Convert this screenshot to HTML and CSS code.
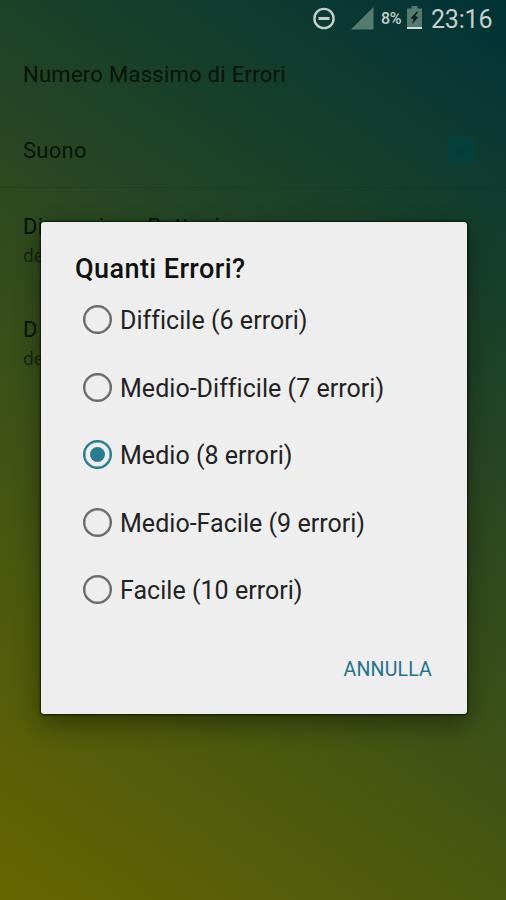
FILE: index.html
```html
<!DOCTYPE html>
<html lang="it">
<head>
<meta charset="utf-8">
<title>Quanti Errori?</title>
<link rel="stylesheet" href="styles.css">
</head>
<body>
<div class="screen">
  <header class="status">
    <svg class="dnd" width="24" height="24" viewBox="0 0 24 24"><circle cx="12" cy="11.500" r="9.600" fill="none" stroke="#c5cfcb" stroke-width="2.400"/><path d="M6.500 11.500h11" stroke="#c5cfcb" stroke-width="3"/></svg>
    <svg class="signal" width="23" height="23" viewBox="0 0 23 23"><path d="M0 22.500L22.500 0V22.500Z" fill="#557b71"/></svg>
    <span class="percent">8%</span>
    <svg class="battery" width="16" height="24" viewBox="0 0 16 24"><path d="M4.500 0h6v2.500H15V20.500H0V2.500h4.500Z" fill="#557b71"/><path d="M9.800 5.500L3.500 12.500l3.200.5-2 5.500 6.800-7.500-3.300-.7 3-4.800Z" fill="#06221d"/><path d="M0 20.800h15v2.200H0z" fill="#d5dfdb"/></svg>
    <span class="clock">23:16</span>
  </header>
  <main class="settings">
    <div class="row"><span class="label">Numero Massimo di Errori</span></div>
    <div class="row sound"><span class="label">Suono</span>
      <svg class="check" width="26" height="26" viewBox="0 0 26 26"><rect width="26" height="26" rx="2" fill="#033f3b"/><path d="M6 13l5 5L21 8" fill="none" stroke="#093d34" stroke-width="2"/></svg>
    </div>
    <div class="row double"><span class="label">Dimensione Bottoni</span><span class="detail">de</span></div>
    <div class="row double"><span class="label">D</span><span class="detail">de</span></div>
  </main>
  <section class="dialog" role="dialog">
    <h1 class="title">Quanti Errori?</h1>
    <div class="options">
      <div class="option"><i class="radio"></i><span>Difficile (6 errori)</span></div>
      <div class="option"><i class="radio"></i><span>Medio-Difficile (7 errori)</span></div>
      <div class="option"><i class="radio on"></i><span>Medio (8 errori)</span></div>
      <div class="option"><i class="radio"></i><span>Medio-Facile (9 errori)</span></div>
      <div class="option"><i class="radio"></i><span>Facile (10 errori)</span></div>
    </div>
    <div class="actions"><span class="cancel">ANNULLA</span></div>
  </section>
</div>
</body>
</html>
```
FILE: styles.css
```css
* { box-sizing: border-box; }
body { margin: 0; font-family: Roboto, "Liberation Sans", sans-serif; }
.screen {
  position: relative;
  width: 506px;
  height: 900px;
  overflow: hidden;
  background: linear-gradient(35deg, #666600 0%, #003338 100%);
}
.status {
  display: flex;
  align-items: center;
  justify-content: flex-end;
  height: 37px;
  padding-right: 14px;
  color: #c5cfcb;
}
.signal { margin-left: 15px; margin-top: -1px; }
.percent { margin-left: 7px; width: 23px; font-size: 16px; font-weight: 500; letter-spacing: -0.3px; white-space: nowrap; }
.battery { margin-left: 3px; margin-top: -2px; }
.clock { margin-left: 8px; width: 61px; font-size: 25px; line-height: 36px; margin-top: 2px; white-space: nowrap; letter-spacing: -0.2px; }
.settings { display: flex; flex-direction: column; color: #071309; }
.row {
  display: flex;
  align-items: center;
  justify-content: space-between;
  height: 75px;
  padding: 0 31px 0 23px;
}
.row.sound { height: 76px; border-bottom: 1px solid rgba(0, 20, 0, 0.1); }
.row.sound .label { margin-top: 2px; }
.label { font-size: 22px; line-height: 28px; letter-spacing: 0.27px; }
.row.double {
  flex-direction: column;
  align-items: flex-start;
  justify-content: flex-start;
  height: 103px;
  padding-top: 25px;
}
.detail { font-size: 19px; line-height: 28px; margin-top: 1px; color: #142810; }
.dialog {
  position: absolute;
  left: 41px;
  top: 222px;
  width: 426px;
  height: 492px;
  padding: 30px 35px 0 34px;
  border-radius: 3px;
  background: #eeeeee;
  box-shadow: 0 0 2px 1px rgba(0, 15, 0, 0.75), 0 10px 26px rgba(0, 0, 0, 0.4);
}
.title { margin: 0; font-size: 27px; line-height: 34px; font-weight: 500; letter-spacing: 0.42px; color: #111; }
.options { color: #222; }
.option {
  display: flex;
  align-items: center;
  height: 67.5px;
  padding-left: 8px;
  font-size: 25px;
}
.option span { margin-left: 8px; white-space: nowrap; margin-top: 2px; letter-spacing: 0.03px; }
.radio {
  display: flex;
  align-items: center;
  justify-content: center;
  width: 29px;
  height: 29px;
  border: 2px solid #696969;
  border-radius: 50%;
  box-shadow: inset 0 0 0 0.5px #777;
}
.radio.on { border-color: #2a7b90; box-shadow: inset 0 0 0 0.5px #2a7b90; }
.radio.on::after { content: ""; width: 15px; height: 15px; border-radius: 50%; background: #2a7b90; }
.actions { display: flex; justify-content: flex-end; margin-top: 32px; }
.cancel { font-size: 19.5px; line-height: 28px; letter-spacing: 0.2px; color: #25728a; }
```
